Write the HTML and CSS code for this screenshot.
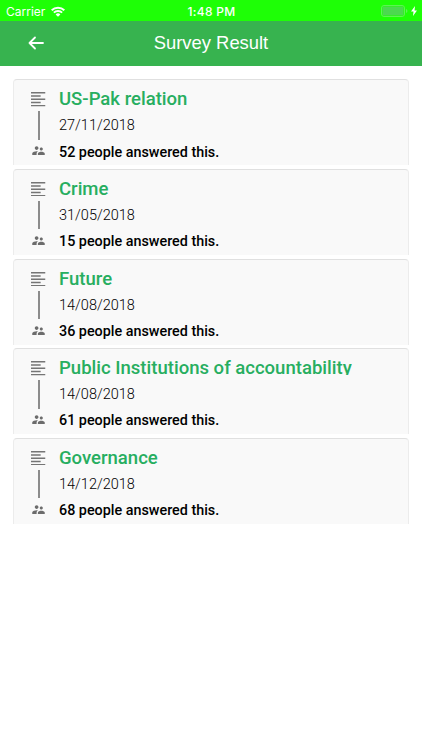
FILE: index.html
```html
<!DOCTYPE html>
<html lang="en">
<head>
    <meta charset="UTF-8">
    <meta name="viewport" content="width=device-width, initial-scale=1.0">
    <title>Survey Result</title>
    <link rel="stylesheet" href="styles.css">
</head>
<body>
    <!-- shared icons -->
    <svg class="sprite">
        <symbol id="icon-lines" viewBox="3 3 18 18">
            <path fill="#757575" d="M15 15H3v2h12v-2zm0-8H3v2h12V7zM3 13h18v-2H3v2zm0 8h18v-2H3v2zM3 3v2h18V3H3z"/>
        </symbol>
        <symbol id="icon-people" viewBox="0 0 24 24">
            <path fill="#6c6c6c" d="M16.5 12c1.38 0 2.49-1.12 2.49-2.5S17.88 7 16.5 7C15.12 7 14 8.12 14 9.5s1.12 2.5 2.5 2.5zM9 11c1.66 0 2.99-1.34 2.99-3S10.66 5 9 5C7.34 5 6 6.34 6 8s1.34 3 3 3zm7.5 3c-1.83 0-5.5.92-5.5 2.75V19h11v-2.25c0-1.83-3.67-2.75-5.5-2.75zM9 13c-2.33 0-7 1.17-7 3.5V19h7v-2.25c0-.85.33-2.34 2.37-3.47C10.5 13.1 9.66 13 9 13z"/>
        </symbol>
    </svg>

    <div class="status-bar">
        <div class="carrier">
            <span>Carrier</span>
            <svg class="wifi" viewBox="0 0 14 11">
                <path d="M0.7 4.3a9 9 0 0 1 12.6 0M2.9 6.6a5.9 5.9 0 0 1 8.2 0" fill="none" stroke="#fff" stroke-width="2"/>
                <path d="M7 10.8L4.6 8.4a3.4 3.4 0 0 1 4.8 0z" fill="#fff"/>
            </svg>
        </div>
        <div class="time">1:48 PM</div>
        <div class="power">
            <svg class="battery" viewBox="0 0 27 12">
                <rect x="0.5" y="0.5" width="23" height="11" rx="2.5" fill="none" stroke="#5cf552"/>
                <rect x="1.5" y="1.5" width="21" height="9" rx="1.2" fill="#4cd950"/>
                <path d="M25 4v4q1.5-.6 1.5-2T25 4z" fill="#5cf552"/>
            </svg>
            <svg class="bolt" viewBox="0 0 6 10">
                <path d="M4 0L0 5.6h2.5L2 10l4-5.6H3.5z" fill="#fff"/>
            </svg>
        </div>
    </div>

    <div class="header">
        <svg class="back" viewBox="0 0 16 14">
            <path d="M15 7H1.5M7 1.5L1.5 7L7 12.5" fill="none" stroke="#fff" stroke-width="1.8" stroke-linecap="round" stroke-linejoin="round"/>
        </svg>
        <div class="header-title">Survey Result</div>
    </div>

    <div class="list">
        <div class="card">
            <div class="icons">
                <svg class="lines"><use href="#icon-lines"/></svg>
                <div class="divider"></div>
                <svg class="people"><use href="#icon-people"/></svg>
            </div>
            <div class="info">
                <div class="title">US-Pak relation</div>
                <div class="date">27/11/2018</div>
                <div class="answered">52 people answered this.</div>
            </div>
        </div>
        <div class="card">
            <div class="icons">
                <svg class="lines"><use href="#icon-lines"/></svg>
                <div class="divider"></div>
                <svg class="people"><use href="#icon-people"/></svg>
            </div>
            <div class="info">
                <div class="title">Crime</div>
                <div class="date">31/05/2018</div>
                <div class="answered">15 people answered this.</div>
            </div>
        </div>
        <div class="card">
            <div class="icons">
                <svg class="lines"><use href="#icon-lines"/></svg>
                <div class="divider"></div>
                <svg class="people"><use href="#icon-people"/></svg>
            </div>
            <div class="info">
                <div class="title">Future</div>
                <div class="date">14/08/2018</div>
                <div class="answered">36 people answered this.</div>
            </div>
        </div>
        <div class="card">
            <div class="icons">
                <svg class="lines"><use href="#icon-lines"/></svg>
                <div class="divider"></div>
                <svg class="people"><use href="#icon-people"/></svg>
            </div>
            <div class="info">
                <div class="title clipped">Public Institutions of accountability</div>
                <div class="date">14/08/2018</div>
                <div class="answered">61 people answered this.</div>
            </div>
        </div>
        <div class="card">
            <div class="icons">
                <svg class="lines"><use href="#icon-lines"/></svg>
                <div class="divider"></div>
                <svg class="people"><use href="#icon-people"/></svg>
            </div>
            <div class="info">
                <div class="title">Governance</div>
                <div class="date">14/12/2018</div>
                <div class="answered">68 people answered this.</div>
            </div>
        </div>
    </div>
</body>
</html>
```
FILE: styles.css
```css
body {
    font-family: Roboto, sans-serif;
    margin: 0;
    padding: 0;
    background-color: #fff;
}
svg {
    display: block;
}
.sprite {
    display: none;
}
.status-bar {
    display: grid;
    grid-template-columns: 1fr auto 1fr;
    align-items: center;
    height: 21px;
    padding: 0 5px 0 6px;
    background-color: #1eff06;
    color: #fff;
    font-family: Inter, sans-serif;
    font-size: 12px;
    line-height: 21px;
}
.carrier {
    display: flex;
    align-items: center;
    gap: 5.5px;
    padding-top: 1px;
    font-size: 12px;
}
.wifi {
    width: 14px;
    height: 11px;
    margin-top: -1px;
}
.time {
    font-weight: 500;
    letter-spacing: 0.3px;
}
.power {
    display: flex;
    align-items: center;
    justify-content: flex-end;
    gap: 3px;
}
.battery {
    width: 27px;
    height: 12px;
}
.bolt {
    width: 6px;
    height: 10px;
}
.header {
    display: grid;
    grid-template-columns: 44px 1fr 44px;
    align-items: center;
    height: 44.5px;
    background-color: #37b34f;
}
.back {
    width: 16px;
    height: 14px;
    margin: 0 0 0 28px;
}
.header-title {
    color: #fff;
    font-family: "Liberation Sans", Arial, sans-serif;
    font-size: 18.4px;
    text-align: center;
}
.list {
    display: flex;
    flex-direction: column;
    gap: 3.5px;
    padding: 13.9px 13px;
}
.card {
    display: flex;
    box-sizing: border-box;
    height: 86.1px;
    border: 1px solid #ececec;
    border-top-color: #e0e0e0;
    border-bottom: none;
    border-radius: 4px 4px 0 0;
    background-color: #f9f9f9;
}
.icons {
    display: flex;
    flex-direction: column;
    align-items: center;
    width: 45px;
    padding: 12px 0 0 3px;
    margin-left: -1px;
}
.lines {
    width: 14.5px;
    height: 14.5px;
}
.divider {
    width: 2px;
    height: 28.5px;
    margin: 4.5px 0 3.5px;
    background-color: #8c8c8c;
}
.people {
    width: 15px;
    height: 15px;
}
.info {
    margin-left: -2px;
    color: #000;
    white-space: nowrap;
}
.title {
    height: 20px;
    padding-top: 7px;
    color: #27ae60;
    font-size: 18.55px;
    font-weight: 500;
    line-height: 24px;
}
.clipped {
    height: 19px;
    margin-bottom: 11px;
    overflow: hidden;
}
.date {
    margin-top: 10px;
    font-size: 14.5px;
    font-weight: 300;
    line-height: 18px;
}
.answered {
    margin-top: 8.3px;
    font-size: 14.35px;
    font-weight: 500;
    line-height: 18px;
}
```
